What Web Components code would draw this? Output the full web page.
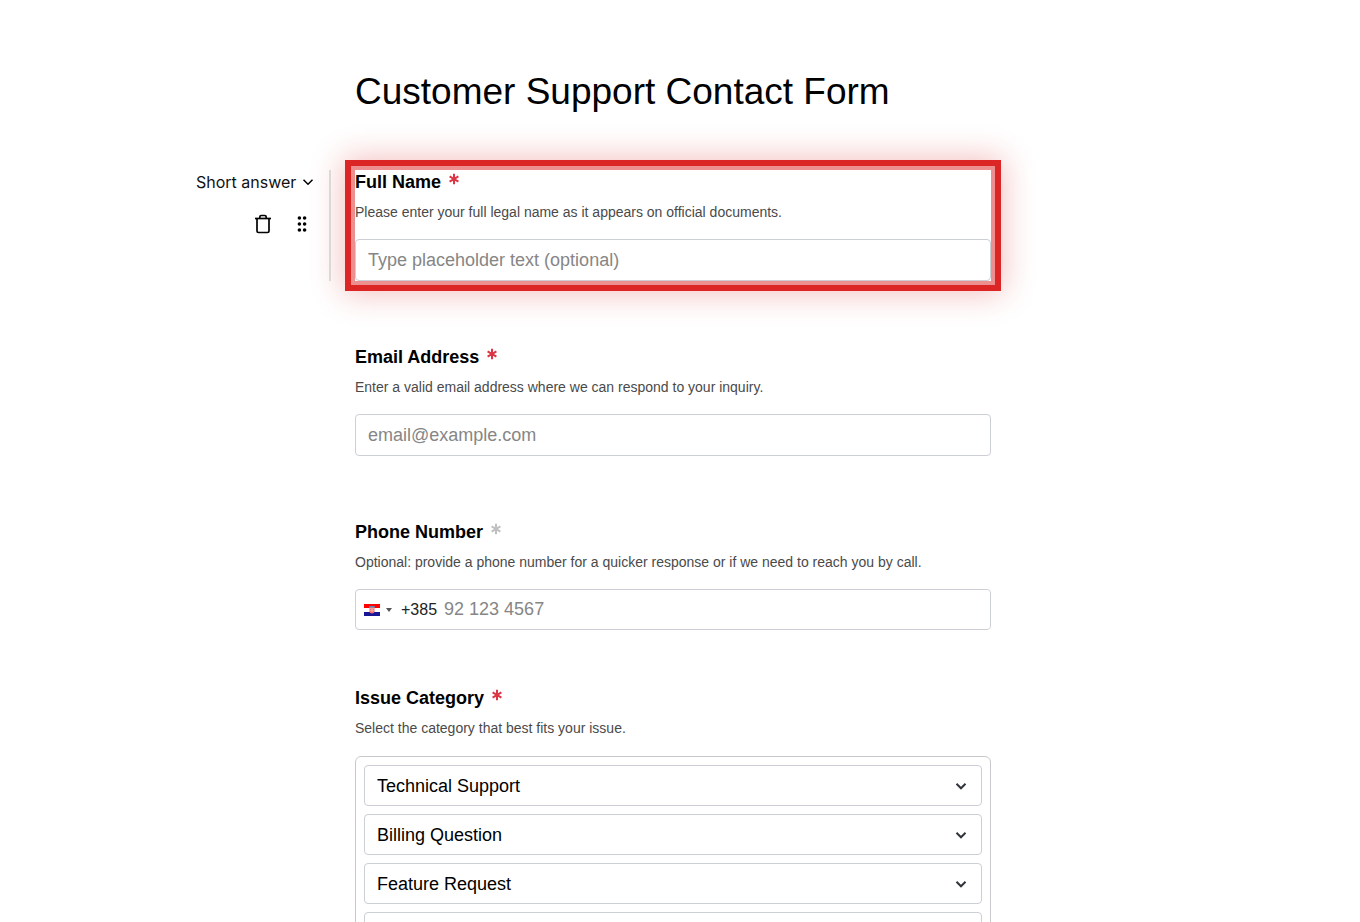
<!DOCTYPE html>
<html lang="en">
<head>
  <meta charset="utf-8">
  <meta name="viewport" content="width=device-width, initial-scale=1">
  <title>Customer Support Contact Form</title>
  <style>
    body {
      margin: 0;
      padding-right: 14px;
      background: #fff;
      color: #000;
      font-family: "Liberation Sans", Arial, sans-serif;
      --form-width: 636px;
      --border: #cdcfd6;
      --muted: #868686;
      --ui-font: Inter, sans-serif;
    }
  </style>
</head>
<body>
  <form-page>
    <form-title>Customer Support Contact Form</form-title>
    <text-field label="Full Name" hint="Please enter your full legal name as it appears on official documents." placeholder="Type placeholder text (optional)" required highlighted>
      <field-tools slot="tools"></field-tools>
    </text-field>
    <text-field label="Email Address" hint="Enter a valid email address where we can respond to your inquiry." placeholder="email@example.com" type="email" required></text-field>
    <phone-field label="Phone Number" hint="Optional: provide a phone number for a quicker response or if we need to reach you by call." placeholder="92 123 4567"></phone-field>
    <choice-field label="Issue Category" hint="Select the category that best fits your issue." options="Technical Support,Billing Question,Feature Request," required></choice-field>
  </form-page>

  <script>
    const chevron = `
      <svg viewBox="0 0 12 8" width="12" height="8" fill="none" stroke="currentColor" aria-hidden="true">
        <path d="M1.500 1.800 6 6.300 10.500 1.800" />
      </svg>
    `;

    const asterisk = `
      <svg class="mark" viewBox="0 0 10 12" width="10" height="12" fill="none" stroke="currentColor" stroke-width="2" aria-hidden="true">
        <path d="M5 0.8V11.2M0.6 3.4 9.4 8.6M9.4 3.4 0.6 8.6" />
      </svg>
    `;

    class FormPage extends HTMLElement {
      constructor() {
        super();
        this.attachShadow({ mode: 'open' });
        this.shadowRoot.innerHTML = `
          <style>
            :host {
              display: block;
            }
            form {
              display: flex;
              flex-direction: column;
              gap: 56px;
              padding-top: 69px;
            }
          </style>
          <form>
            <slot></slot>
          </form>
        `;
      }
    }

    class FormTitle extends HTMLElement {
      constructor() {
        super();
        this.attachShadow({ mode: 'open' });
        this.shadowRoot.innerHTML = `
          <style>
            :host {
              display: grid;
              grid-template-columns: 1fr minmax(0, var(--form-width)) 1fr;
            }
            h1 {
              grid-column: 2;
              margin: 0;
              font-size: 37px;
              font-weight: 400;
              line-height: 45px;
            }
          </style>
          <h1><slot></slot></h1>
        `;
      }
    }

    class FieldTools extends HTMLElement {
      constructor() {
        super();
        this.attachShadow({ mode: 'open' });
        this.shadowRoot.innerHTML = `
          <style>
            :host {
              display: flex;
              flex-direction: column;
              align-items: flex-end;
              gap: 16px;
              box-sizing: border-box;
              height: 100%;
              margin-right: 24px;
              padding-right: 15px;
              border-right: 2px solid #dcd8d8;
            }
            .type {
              display: grid;
              align-items: center;
            }
            select, .type svg {
              grid-area: 1 / 1;
            }
            select {
              appearance: none;
              border: 0;
              padding: 0 17px 0 0;
              background: none;
              color: #111;
              font: 16px/24px var(--ui-font);
            }
            .type svg {
              justify-self: end;
              stroke-width: 1.5;
              pointer-events: none;
            }
            .actions {
              display: flex;
              gap: 15px;
            }
            button {
              display: grid;
              place-items: center;
              width: 24px;
              height: 28px;
              padding: 0;
              border: 0;
              background: none;
              color: #000;
            }
          </style>
          <div class="type">
            <select aria-label="Question type">
              <option>Short answer</option>
              <option>Long answer</option>
              <option>Email</option>
              <option>Phone</option>
            </select>
            ${chevron}
          </div>
          <div class="actions">
            <button type="button" aria-label="Delete question">
              <svg viewBox="0 0 18 20" width="18" height="20" fill="none" stroke="currentColor" stroke-width="1.7" aria-hidden="true">
                <path d="M1 4.5H17" />
                <path d="M3 4.500V17a1.500 1.500 0 0 0 1.500 1.500h9a1.500 1.500 0 0 0 1.500-1.500V4.500" />
                <path d="M5.800 4.500V3a1.500 1.500 0 0 1 1.500-1.500h3.400a1.500 1.500 0 0 1 1.500 1.500v1.500" />
              </svg>
            </button>
            <button type="button" aria-label="Move question">
              <svg viewBox="0 0 10 16" width="10" height="16" fill="currentColor" aria-hidden="true">
                <circle cx="2.400" cy="2" r="1.800" /><circle cx="7.600" cy="2" r="1.800" />
                <circle cx="2.400" cy="8" r="1.800" /><circle cx="7.600" cy="8" r="1.800" />
                <circle cx="2.400" cy="14" r="1.800" /><circle cx="7.600" cy="14" r="1.800" />
              </svg>
            </button>
          </div>
        `;
      }
    }

    // Shared label, hint and column layout. Subclasses supply the control.
    class FormField extends HTMLElement {
      constructor() {
        super();
        this.attachShadow({ mode: 'open' });
      }

      connectedCallback() {
        this.shadowRoot.innerHTML = `
          <style>
            :host {
              display: grid;
              grid-template-columns: 1fr minmax(0, var(--form-width)) 1fr;
              margin-bottom: 8px;
            }
            .field {
              position: relative;
              grid-column: 2;
            }
            :host([highlighted]) .field {
              box-shadow:
                0 0 0 4px #ed8f8f,
                0 0 0 10px #dc2626,
                0 0 30px 12px rgba(220, 38, 38, 0.3);
            }
            slot[name="tools"] {
              display: block;
              grid-column: 1;
              grid-row: 1;
              position: relative;
              z-index: 1;
            }
            .label {
              display: flex;
              align-items: center;
              gap: 8px;
              font-size: 18px;
              font-weight: 700;
              line-height: 24px;
            }
            .mark {
              margin-bottom: 6px;
              color: #c0c0c0;
            }
            :host([required]) .mark {
              color: #dc3545;
            }
            p {
              margin: 8px 0 17px;
              color: #4a4a4a;
              font-size: 14px;
              line-height: 20px;
            }
            input, select {
              box-sizing: border-box;
              width: 100%;
              margin: 0;
              border: 1px solid var(--border);
              border-radius: 4px;
              background: #fff;
              color: #000;
              font: 18px/24px "Liberation Sans", Arial, sans-serif;
            }
            input {
              display: block;
              height: 42px;
              padding: 0 12px;
            }
            input::placeholder {
              color: var(--muted);
              opacity: 1;
            }
            ${this.styles()}
          </style>
          <slot name="tools"></slot>
          <div class="field">
            <label class="label" for="control">${this.getAttribute('label')}${asterisk}</label>
            <p id="hint">${this.getAttribute('hint')}</p>
            ${this.control()}
          </div>
        `;
      }

      styles() {
        return '';
      }
    }

    class TextField extends FormField {
      control() {
        return `<input id="control" type="${this.getAttribute('type') || 'text'}" placeholder="${this.getAttribute('placeholder')}" aria-describedby="hint">`;
      }
    }

    class PhoneField extends FormField {
      styles() {
        return `
          :host {
            margin-bottom: 0;
          }
          .phone {
            display: flex;
            align-items: center;
            box-sizing: border-box;
            height: 41px;
            padding-left: 8px;
            border: 1px solid var(--border);
            border-radius: 4px;
          }
          .country {
            display: flex;
            align-items: center;
            gap: 6px;
            height: 39px;
            padding: 0;
            border: 0;
            background: none;
            color: #555;
          }
          .code {
            margin-left: 9px;
            color: #222;
            font-size: 16px;
            line-height: 24px;
          }
          .phone input {
            flex: 1;
            width: auto;
            height: 39px;
            padding: 0 12px 0 7px;
            border: 0;
          }
        `;
      }

      control() {
        return `
          <div class="phone">
            <button class="country" type="button" aria-label="Country: Croatia">
              <svg viewBox="0 0 16 12" width="16" height="12" aria-hidden="true">
                <path fill="#f00" d="M0 0H16V4H0z" />
                <path fill="#fff" d="M0 4H16V8H0z" />
                <path fill="#171796" d="M0 8H16V12H0z" />
                <path fill="#f66b6b" d="M5.500 3H10.500V7.500Q10.500 9.500 8 9.500T5.500 7.500z" />
                <path fill="#ffd0d0" d="M6.500 4h1v1h-1zM8.500 4h1v1h-1zM7.500 5h1v1h-1zM6.500 6h1v1h-1zM8.500 6h1v1h-1zM7.500 7h1v1h-1z" />
                <path fill="#4b8fc4" d="M5 2.500 6 1.800 7 2.200 8 1.700 9 2.200 10 1.800 11 2.500 10.500 3.500H5.500z" />
              </svg>
              <svg viewBox="0 0 6 4" width="6" height="4" fill="currentColor" aria-hidden="true"><path d="M0 0H6L3 4z" /></svg>
            </button>
            <span class="code">+385</span>
            <input id="control" type="tel" placeholder="${this.getAttribute('placeholder')}" aria-describedby="hint">
          </div>
        `;
      }
    }

    class ChoiceField extends FormField {
      styles() {
        return `
          :host {
            margin-bottom: 0;
          }
          p {
            margin-bottom: 18px;
          }
          .choices {
            display: flex;
            flex-direction: column;
            gap: 8px;
            padding: 8px;
            border: 1px solid #c8c9cc;
            border-radius: 6px;
          }
          .choice {
            display: grid;
            align-items: center;
          }
          .choice select, .choice svg {
            grid-area: 1 / 1;
          }
          select {
            appearance: none;
            height: 41px;
            padding: 0 40px 0 12px;
          }
          .choice svg {
            justify-self: end;
            margin-right: 15px;
            color: #30343b;
            stroke-width: 2;
            pointer-events: none;
          }
        `;
      }

      control() {
        const choices = this.getAttribute('options').split(',').map((option, i) => `
          <div class="choice">
            <select id="${i ? `choice-${i}` : 'control'}" aria-label="Option ${i + 1}">
              <option>${option}</option>
            </select>
            ${chevron}
          </div>
        `);
        return `<div class="choices">${choices.join('')}</div>`;
      }
    }

    customElements.define('form-page', FormPage);
    customElements.define('form-title', FormTitle);
    customElements.define('field-tools', FieldTools);
    customElements.define('text-field', TextField);
    customElements.define('phone-field', PhoneField);
    customElements.define('choice-field', ChoiceField);
  </script>
</body>
</html>
